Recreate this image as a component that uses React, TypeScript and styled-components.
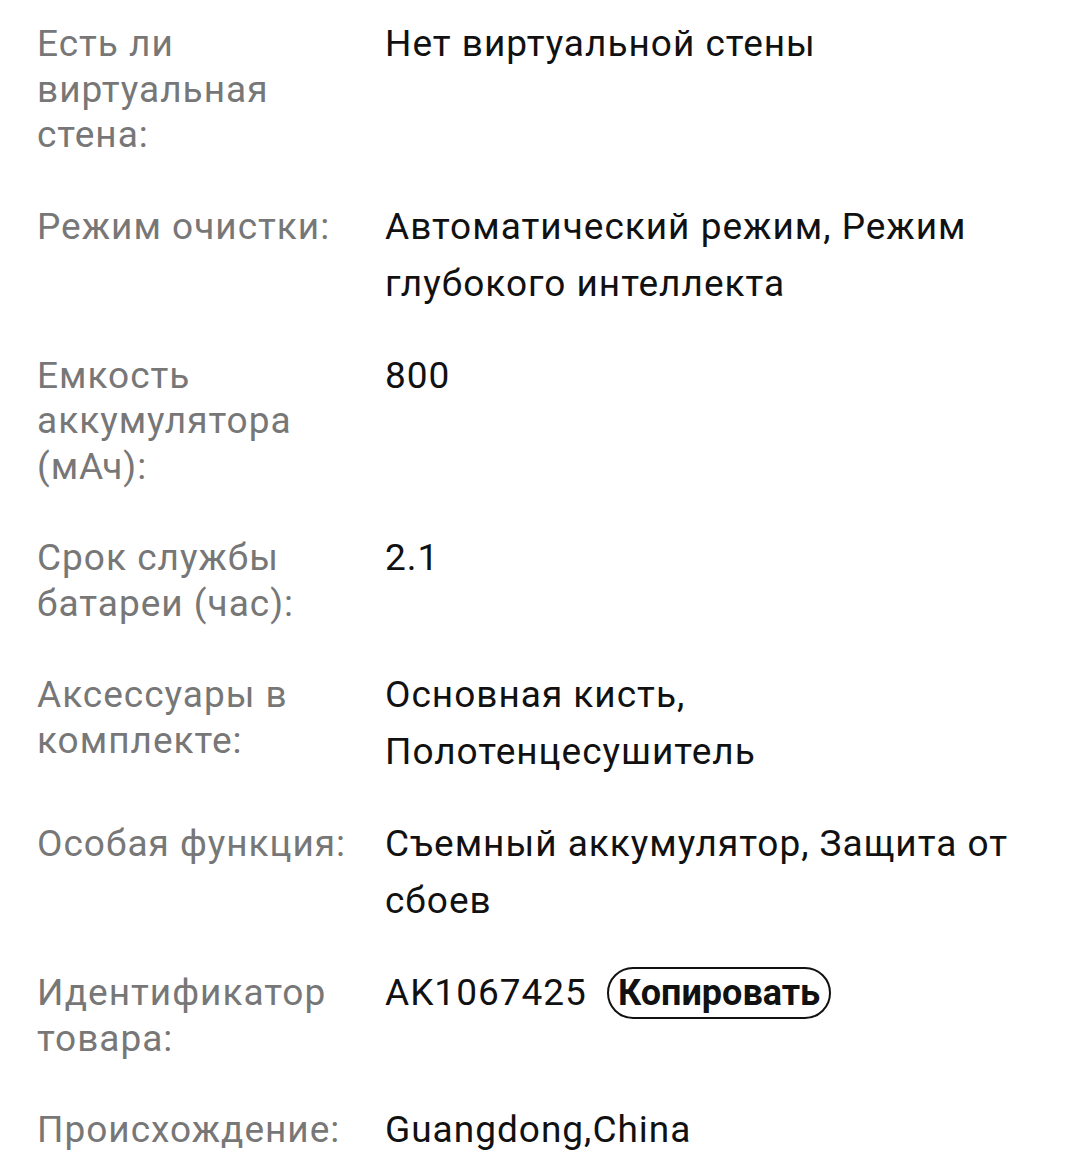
import React from "react";
import styled, { createGlobalStyle } from "styled-components";

const Global = createGlobalStyle`
  html, body { margin: 0; padding: 0; background: #fff; }
  body { font-family: Roboto, "Noto Sans", "Liberation Sans", sans-serif; }
`;

const List = styled.div`
  display: grid;
  grid-template-columns: 315px 1fr;
  column-gap: 33px;
  row-gap: 35px;
  padding: 15px 37px 0 37px;
`;

const Label = styled.div`
  font-size: 37px;
  line-height: 45.5px;
  letter-spacing: 1px;
  color: #777777;
  padding: 6px 0 5px;
`;

const Value = styled.div`
  font-size: 37px;
  line-height: 57px;
  letter-spacing: 1px;
  color: #111111;
  display: flex;
  align-items: center;
  flex-wrap: wrap;
  align-self: start;
`;

const Text = styled.span``;

const CopyButton = styled.button`
  margin-left: 20px;
  height: 52px;
  padding: 0 9px;
  border: 2px solid #111;
  border-radius: 26px;
  background: #fff;
  color: #111;
  font-family: Roboto, "Noto Sans", "Liberation Sans", sans-serif;
  font-weight: 700;
  font-size: 36px;
  line-height: 48px;
  letter-spacing: 0;
  box-sizing: border-box;
`;

const rows: { label: string; value: string; copy?: boolean }[] = [
  { label: "Есть ли виртуальная стена:", value: "Нет виртуальной стены" },
  { label: "Режим очистки:", value: "Автоматический режим, Режим глубокого интеллекта" },
  { label: "Емкость аккумулятора (мАч):", value: "800" },
  { label: "Срок службы батареи (час):", value: "2.1" },
  { label: "Аксессуары в комплекте:", value: "Основная кисть, Полотенцесушитель" },
  { label: "Особая функция:", value: "Съемный аккумулятор, Защита от сбоев" },
  { label: "Идентификатор товара:", value: "AK1067425", copy: true },
  { label: "Происхождение:", value: "Guangdong,China" },
];

export default function App() {
  return (
    <>
      <Global />
      <List>
        {rows.map((r) => (
          <React.Fragment key={r.label}>
            <Label>{r.label}</Label>
            <Value>
              <Text>{r.value}</Text>
              {r.copy && <CopyButton>Копировать</CopyButton>}
            </Value>
          </React.Fragment>
        ))}
      </List>
    </>
  );
}
